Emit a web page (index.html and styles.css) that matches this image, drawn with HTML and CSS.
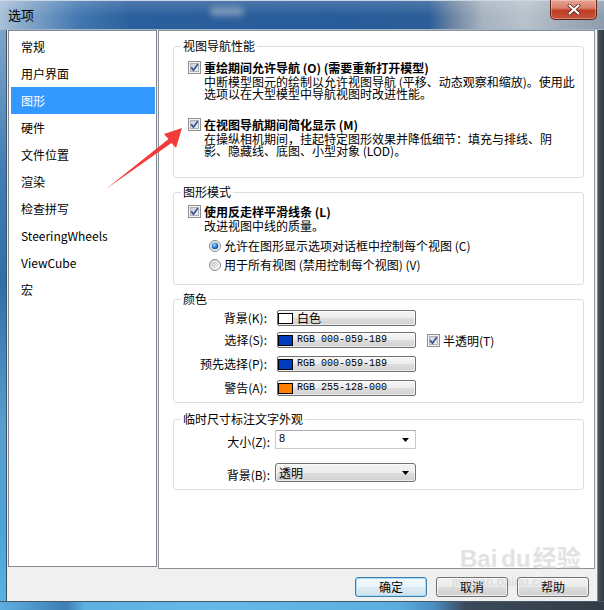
FILE: index.html
```html
<!DOCTYPE html>
<html lang="zh-CN">
<head>
<meta charset="utf-8">
<title>选项</title>
<link rel="stylesheet" href="styles.css">
</head>
<body>
<svg class="defs" aria-hidden="true">
  <defs>
    <linearGradient id="cbFill" x1="0" y1="0" x2="1" y2="1">
      <stop offset="0" stop-color="#c9ced6"/>
      <stop offset="1" stop-color="#f4f5f7"/>
    </linearGradient>
    <linearGradient id="rdBg" x1="0" y1="0" x2="1" y2="1">
      <stop offset="0" stop-color="#d8d8d8"/>
      <stop offset="1" stop-color="#ffffff"/>
    </linearGradient>
    <linearGradient id="rdOff" x1="0" y1="0" x2="1" y2="1">
      <stop offset="0" stop-color="#c8c8c8"/>
      <stop offset="1" stop-color="#f0f0f0"/>
    </linearGradient>
    <radialGradient id="rdOn" cx="0.4" cy="0.35" r="0.75">
      <stop offset="0" stop-color="#b8e2ff"/>
      <stop offset="0.45" stop-color="#2f82d6"/>
      <stop offset="1" stop-color="#0b3c86"/>
    </radialGradient>
    <symbol id="cb" viewBox="0 0 13 13">
      <rect x="0.5" y="0.5" width="12" height="12" fill="#f4f4f4" stroke="#8f8f8f"/>
      <rect x="2.5" y="2.5" width="8" height="8" fill="url(#cbFill)" stroke="#a9b1bb"/>
      <path d="M3.2 6.4 L5.5 9.2 L9.8 3.2" fill="none" stroke="#3b4f8f" stroke-width="1.7"/>
    </symbol>
    <symbol id="rd-on" viewBox="0 0 12 12">
      <circle cx="6" cy="6" r="5.5" fill="url(#rdBg)" stroke="#8a8a8a"/>
      <circle cx="6" cy="6" r="3.3" fill="url(#rdOn)"/>
    </symbol>
    <symbol id="rd-off" viewBox="0 0 12 12">
      <circle cx="6" cy="6" r="5.5" fill="url(#rdBg)" stroke="#8a8a8a"/>
      <circle cx="6" cy="6" r="3.3" fill="url(#rdOff)"/>
    </symbol>
    <symbol id="dd" viewBox="0 0 7 4">
      <path d="M0 0 H7 L3.5 4 Z" fill="#000"/>
    </symbol>
  </defs>
</svg>

<div class="window">
  <div class="titlebar">
    <span class="title">选项</span>
    <span class="ghost"></span>
    <div class="close">
      <svg width="14" height="11" viewBox="0 0 14 11">
        <path d="M2.5 1.5 L11.5 9.5 M11.5 1.5 L2.5 9.5" stroke="#4a1a14" stroke-width="3.6" stroke-linecap="round"/>
        <path d="M2.5 1.5 L11.5 9.5 M11.5 1.5 L2.5 9.5" stroke="#ffffff" stroke-width="2.2" stroke-linecap="round"/>
      </svg>
    </div>
  </div>

  <div class="frame-row">
    <div class="frame-left"></div>
    <div class="client">
      <div class="main">
        <ul class="nav">
          <li>常规</li>
          <li>用户界面</li>
          <li class="sel">图形</li>
          <li>硬件</li>
          <li>文件位置</li>
          <li>渲染</li>
          <li>检查拼写</li>
          <li>SteeringWheels</li>
          <li>ViewCube</li>
          <li>宏</li>
        </ul>

        <div class="panel">
          <fieldset class="group g1">
            <legend>视图导航性能</legend>
            <div class="opt">
              <svg class="cb"><use href="#cb"/></svg>
              <div>
                <div class="opt-title">重绘期间允许导航 (O) (需要重新打开模型)</div>
                <div class="opt-desc">中断模型图元的绘制以允许视图导航 (平移、动态观察和缩放)。使用此<br>选项以在大型模型中导航视图时改进性能。</div>
              </div>
            </div>
            <div class="opt">
              <svg class="cb"><use href="#cb"/></svg>
              <div>
                <div class="opt-title">在视图导航期间简化显示 (M)</div>
                <div class="opt-desc">在操纵相机期间，挂起特定图形效果并降低细节：填充与排线、阴<br>影、隐藏线、底图、小型对象 (LOD)。</div>
              </div>
            </div>
          </fieldset>

          <fieldset class="group g2">
            <legend>图形模式</legend>
            <div class="opt">
              <svg class="cb"><use href="#cb"/></svg>
              <div>
                <div class="opt-title">使用反走样平滑线条 (L)</div>
                <div class="opt-desc">改进视图中线的质量。</div>
              </div>
            </div>
            <div class="radios">
              <div class="radio-row"><svg class="rd"><use href="#rd-on"/></svg><span>允许在图形显示选项对话框中控制每个视图 (C)</span></div>
              <div class="radio-row"><svg class="rd"><use href="#rd-off"/></svg><span>用于所有视图 (禁用控制每个视图) (V)</span></div>
            </div>
          </fieldset>

          <fieldset class="group g3">
            <legend>颜色</legend>
            <div class="crow">
              <span class="clabel">背景(K):</span>
              <div class="cbtn"><span class="swatch sw-white"></span><span class="ctext">白色</span></div>
            </div>
            <div class="crow r2">
              <span class="clabel">选择(S):</span>
              <div class="cbtn"><span class="swatch sw-blue"></span><span class="ctext mono">RGB 000-059-189</span></div>
              <div class="semi"><svg class="cb"><use href="#cb"/></svg><span>半透明(T)</span></div>
            </div>
            <div class="crow">
              <span class="clabel">预先选择(P):</span>
              <div class="cbtn"><span class="swatch sw-blue"></span><span class="ctext mono">RGB 000-059-189</span></div>
            </div>
            <div class="crow">
              <span class="clabel">警告(A):</span>
              <div class="cbtn"><span class="swatch sw-orange"></span><span class="ctext mono">RGB 255-128-000</span></div>
            </div>
          </fieldset>

          <fieldset class="group g4">
            <legend>临时尺寸标注文字外观</legend>
            <div class="drow">
              <span class="dlabel">大小(Z):</span>
              <div class="combo edit"><span class="val8">8</span><svg class="dd"><use href="#dd"/></svg></div>
            </div>
            <div class="drow">
              <span class="dlabel">背景(B):</span>
              <div class="combo drop"><span class="dval">透明</span><svg class="dd"><use href="#dd"/></svg></div>
            </div>
          </fieldset>
        </div>
      </div>

      <div class="buttons">
        <button class="btn default">确定</button>
        <button class="btn">取消</button>
        <button class="btn">帮助</button>
      </div>
    </div>
    <div class="frame-right"></div>
  </div>
  <div class="frame-bottom"></div>

  <svg class="arrow" width="604" height="610" viewBox="0 0 604 610" aria-hidden="true">
    <polygon points="182,128 164,134 168.5,139 106,189 171.5,143 176,148" fill="#f23c3c"/>
  </svg>

  <div class="watermark">
    <div class="wm-big">Bai<span class="wm-du">du</span>经验</div>
    <div class="wm-small">jingyan.baidu.com</div>
  </div>
</div>
</body>
</html>
```

FILE: styles.css
```css
* {
  box-sizing: border-box;
}

html,
body {
  margin: 0;
  padding: 0;
}

body {
  width: 604px;
  height: 610px;
  overflow: hidden;
  background: #2f3a46;
  font-family: "Noto Sans CJK SC", "Noto Sans", sans-serif;
  font-size: 12px;
  color: #000;
}

.defs {
  position: absolute;
  width: 0;
  height: 0;
  overflow: hidden;
}

.window {
  position: relative;
  width: 604px;
  height: 610px;
  display: flex;
  flex-direction: column;
}

/* ---------- title bar ---------- */
.titlebar {
  height: 30px;
  flex: none;
  display: flex;
  align-items: flex-start;
  border-top: 1px solid #c9d7e6;
  border-bottom: 1px solid #9fb6cf;
  background:
    linear-gradient(to bottom, rgba(255, 255, 255, 0.16), rgba(255, 255, 255, 0) 55%),
    linear-gradient(to right, #a9c0d8 0%, #86a8cb 4%, #4277b0 13%, #2b5f9c 22%, #285c9a 55%, #2b5e99 71%, #6e86a2 75%, #a7b3c1 80%, #b9c2cc 87%, #a2aebb 93%, #8f9cad 100%);
}

.title {
  margin: 6px 0 0 8px;
  font-size: 13px;
  line-height: 16px;
  color: #000;
}

.ghost {
  margin: 6px 0 0 176px;
  width: 34px;
  height: 9px;
  border-radius: 5px;
  background: rgba(190, 196, 206, 0.55);
  filter: blur(3px);
}

.close {
  margin-left: auto;
  margin-right: 7px;
  margin-top: -1px;
  width: 47px;
  height: 20px;
  border: 1px solid #5e241b;
  border-top: none;
  border-radius: 0 0 5px 5px;
  background: linear-gradient(to bottom, #e7a392 0%, #d8806b 42%, #c23d25 55%, #c6523a 100%);
  box-shadow: inset 0 0 0 1px rgba(255, 255, 255, 0.3);
  display: flex;
  align-items: center;
  justify-content: center;
}

/* ---------- frame ---------- */
.frame-row {
  display: flex;
  height: 571px;
  flex: none;
}

.frame-left {
  width: 7px;
  flex: none;
  border-right: 1px solid #3e4d5e;
  background: linear-gradient(to bottom, #7da4c8 0%, #3f7db6 25%, #2f6fa8 45%, #5a9fd0 70%, #4aa4da 88%, #5ab2e2 100%);
}

.frame-right {
  width: 7px;
  flex: none;
  border-left: 1px solid #7f8994;
  background: linear-gradient(to right, #4a535e, #30383f);
}

.frame-bottom {
  height: 9px;
  flex: none;
  border-top: 1px solid #46576a;
  background: linear-gradient(to right, #5eaee0 0%, #3e7fb4 11%, #5cb0e2 14%, #66b8e6 35%, #5aaee0 66%, #4a8cc0 72%, #3b4a5a 77%, #333c46 100%);
}

.client {
  width: 590px;
  flex: none;
  background: #f0f0f0;
  display: flex;
  flex-direction: column;
}

.main {
  height: 539px;
  flex: none;
  display: flex;
  align-items: flex-start;
  padding-left: 1px;
}

/* ---------- left list ---------- */
.nav {
  width: 149px;
  height: 537px;
  margin: 0 1px 0 0;
  padding: 2px 1px 0 2px;
  list-style: none;
  background: #fff;
  border: 1px solid #828790;
}

.nav li {
  height: 27px;
  line-height: 27px;
  padding-left: 10px;
  font-size: 12px;
  white-space: nowrap;
}

.nav li.sel {
  background: #3399ff;
  color: #fff;
}

/* ---------- right panel ---------- */
.panel {
  width: 437px;
  height: 539px;
  background: #fff;
  border: 1px solid #8e9196;
  padding: 8px 10px 0 14px;
}

.group {
  margin: 0;
  min-width: 0;
  border: 1px solid #d5dfe5;
  border-radius: 3px;
}

.group legend {
  margin-left: 7px;
  padding: 0 2px;
  font-size: 12px;
  line-height: 14px;
}

.g1 {
  padding: 7px 0 20px;
}

.g2 {
  margin-top: 7px;
  padding: 5px 0 10px;
}

.g3 {
  margin-top: 7px;
  padding: 4px 0 6px;
}

.g4 {
  margin-top: 9px;
  padding: 4px 0 7px;
}

.cb {
  width: 13px;
  height: 13px;
  flex: none;
}

.rd {
  width: 12px;
  height: 12px;
  flex: none;
}

.opt {
  display: flex;
  align-items: flex-start;
  gap: 3px;
  padding-left: 14px;
}

.opt .cb {
  margin-top: 1px;
}

.opt + .opt {
  margin-top: 17px;
}

.opt-title {
  font-weight: bold;
  line-height: 15px;
  white-space: nowrap;
}

.opt-desc {
  margin-top: 1px;
  line-height: 12px;
  white-space: nowrap;
}

.radios {
  margin-top: 4px;
  padding-left: 35px;
}

.radio-row {
  display: flex;
  align-items: center;
  gap: 3px;
  height: 19px;
  white-space: nowrap;
}

/* colour rows */
.crow {
  display: flex;
  align-items: center;
  height: 16px;
}

.crow + .crow {
  margin-top: 8px;
}

.crow.r2 {
  margin-top: 6px;
}

.clabel {
  width: 93px;
  margin-right: 10px;
  text-align: right;
  white-space: nowrap;
  line-height: 16px;
}

.cbtn {
  width: 139px;
  height: 16px;
  flex: none;
  display: flex;
  align-items: center;
  border: 1px solid #707070;
  border-radius: 2px;
  background: linear-gradient(to bottom, #f6f6f6 0%, #ececec 50%, #dddddd 51%, #d2d2d2 100%);
  box-shadow: inset 0 0 0 1px rgba(255, 255, 255, 0.6);
}

.swatch {
  width: 15px;
  height: 11px;
  flex: none;
  border: 1px solid #000;
}

.sw-white {
  background: #fff;
}

.sw-blue {
  background: #003bbd;
}

.sw-orange {
  background: #ff8000;
}

.ctext {
  margin-left: 4px;
  line-height: 14px;
  white-space: nowrap;
}

.mono {
  font-family: "Liberation Mono", "DejaVu Sans Mono", monospace;
  font-size: 10px;
}

.semi {
  display: flex;
  align-items: center;
  gap: 3px;
  margin-left: 11px;
  white-space: nowrap;
}

/* dropdown rows */
.drow {
  display: flex;
  align-items: center;
  height: 19px;
}

.drow + .drow {
  margin-top: 14px;
}

.dlabel {
  width: 96px;
  margin-right: 5px;
  text-align: right;
  white-space: nowrap;
  padding-top: 3px;
}

.combo {
  width: 141px;
  height: 19px;
  flex: none;
  display: flex;
  align-items: center;
  justify-content: space-between;
  padding: 0 6px 0 3px;
}

.combo.edit {
  align-items: flex-start;
  border: 1px solid #c7c9cf;
  border-top-color: #abadb3;
  background: #fff;
}

.combo.drop {
  border: 1px solid #707070;
  border-radius: 3px;
  background: linear-gradient(to bottom, #f4f4f4 0%, #ebebeb 50%, #dddddd 51%, #cfcfcf 100%);
  box-shadow: inset 0 0 0 1px rgba(255, 255, 255, 0.6);
}

.val8 {
  font-family: "Liberation Sans", sans-serif;
  font-size: 11px;
  line-height: 13px;
  margin-top: 1px;
}

.dval {
  line-height: 16px;
  font-size: 12px;
}

.dd {
  width: 7px;
  height: 4px;
  align-self: center;
}

/* ---------- bottom buttons ---------- */
.buttons {
  height: 32px;
  flex: none;
  display: flex;
  justify-content: flex-end;
  gap: 9px;
  padding: 8px 8px 0 0;
}

.btn {
  width: 72px;
  height: 20px;
  margin: 0;
  padding: 0;
  font-family: "Noto Sans CJK SC", sans-serif;
  font-size: 12px;
  line-height: 18px;
  color: #000;
  border: 1px solid #707070;
  border-radius: 3px;
  background: linear-gradient(to bottom, #f2f2f2 0%, #ebebeb 50%, #dddddd 51%, #cfcfcf 100%);
  box-shadow: inset 0 0 0 1px rgba(255, 255, 255, 0.7);
}

.btn.default {
  border-color: #3c7fb1;
  box-shadow: inset 0 0 0 1px #a6dcf8;
  background: linear-gradient(to bottom, #f4f9fc 0%, #eaf4fa 50%, #dceaf3 51%, #d0e2ee 100%);
}

/* ---------- overlays ---------- */
.arrow {
  position: absolute;
  left: 0;
  top: 0;
  pointer-events: none;
}

.watermark {
  position: absolute;
  left: 460px;
  top: 545px;
  pointer-events: none;
  color: rgba(205, 205, 205, 0.3);
  font-family: "Liberation Sans", "Noto Sans CJK SC", sans-serif;
  text-shadow: 0 0 1px rgba(150, 150, 150, 0.2);
}

.wm-big {
  font-size: 24px;
  font-weight: bold;
  line-height: 28px;
  white-space: nowrap;
}

.wm-du {
  margin-left: 4px;
  margin-right: 2px;
}

.wm-small {
  margin-top: 2px;
  margin-left: -8px;
  font-size: 13px;
  line-height: 14px;
  white-space: nowrap;
}
```
